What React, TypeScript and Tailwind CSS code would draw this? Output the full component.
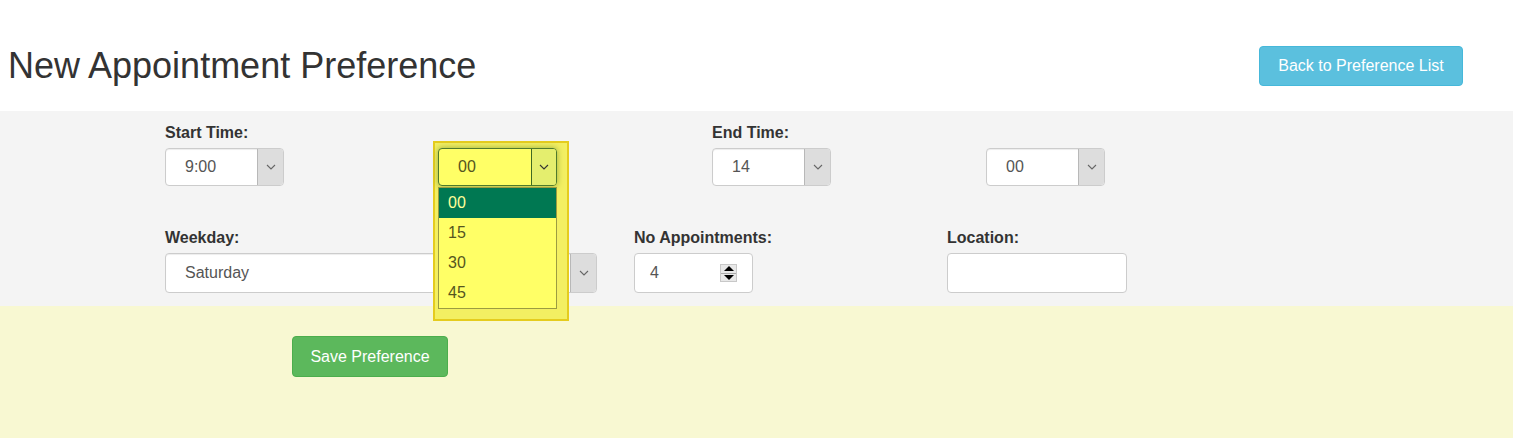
import React from 'react';

const Chevron: React.FC<{ className?: string }> = ({ className = '' }) => (
  <svg width="10" height="6" viewBox="0 0 10 6" className={className}>
    <path d="M1 1 L5 5 L9 1" fill="none" stroke="currentColor" strokeWidth="1.1" />
  </svg>
);

interface SelectBoxProps {
  value: string;
  width: string;
  height?: string;
}

const SelectBox: React.FC<SelectBoxProps> = ({ value, width, height = 'h-[38px]' }) => (
  <div className={`flex ${width} ${height} bg-white border border-[#cccccc] rounded-[4px] shadow-[inset_0_1px_1px_rgba(0,0,0,0.075)]`}>
    <div className="flex-1 flex items-center pl-[19px] text-[16px] text-[#555555]">{value}</div>
    <div className="w-[26px] flex items-center justify-center bg-[#dddddd] border-l border-[#b8b8b8] rounded-r-[3px] text-[#666666]">
      <Chevron />
    </div>
  </div>
);

const Label: React.FC<{ children: React.ReactNode }> = ({ children }) => (
  <label className="block h-[20px] leading-[20px] mb-[5px] text-[16px] font-bold text-[#333333]">{children}</label>
);

export default function App() {
  const minutes = ['00', '15', '30', '45'];

  return (
    <div className="w-[1513px] h-[438px] bg-white font-['Liberation_Sans',Arial,sans-serif] text-[#333333] overflow-hidden">
      {/* Header */}
      <div className="h-[111px] flex items-center justify-between pl-[8px] pr-[50px] pt-[21px]">
        <h1 className="text-[36px] leading-[40px] font-normal text-[#333333]">New Appointment Preference</h1>
        <button className="h-[40px] w-[204px] bg-[#5bc0de] border border-[#46b8da] rounded-[4px] text-white text-[16px]">
          Back to Preference List
        </button>
      </div>

      {/* Form panel */}
      <div className="bg-[#f4f4f4] pt-[12px] pb-[13px] pl-[165px]">
        <div className="flex">
          <div className="w-[273px]">
            <Label>Start Time:</Label>
            <SelectBox value="9:00" width="w-[119px]" />
          </div>
          <div className="w-[274px] pt-[25px]">
            <div className="relative w-[119px]">
              {/* open dropdown, highlighted */}
              <div className="absolute left-[-5px] top-[-7px] w-[136px] h-[180px] bg-[#f3ef62] border-2 border-[#e5cc1e]" />
              <div className="relative flex w-[119px] h-[38px] bg-[#ffff66] border border-[#4f7a2c] rounded-[4px] shadow-[0_0_6px_rgba(90,130,40,0.6)]">
                <div className="flex-1 flex items-center pl-[19px] text-[16px] text-[#555520]">00</div>
                <div className="w-[25px] flex items-center justify-center bg-[#e4ee6e] border-l border-[#3f6a22] rounded-r-[3px] text-[#333333]">
                  <Chevron />
                </div>
              </div>
              <div className="absolute left-0 top-[39px] w-[119px] bg-[#ffff66] border border-[#9c9c40]">
                {minutes.map((m, i) => (
                  <div
                    key={m}
                    className={`h-[30px] flex items-center pl-[9px] text-[16px] ${i === 0 ? 'bg-[#007852] text-[#ffff99]' : 'text-[#555520]'}`}
                  >
                    {m}
                  </div>
                ))}
              </div>
            </div>
          </div>
          <div className="w-[274px]">
            <Label>End Time:</Label>
            <SelectBox value="14" width="w-[119px]" />
          </div>
          <div className="pt-[25px]">
            <SelectBox value="00" width="w-[119px]" />
          </div>
        </div>

        <div className="flex mt-[42px]">
          <div className="w-[469px]">
            <Label>Weekday:</Label>
            <SelectBox value="Saturday" width="w-[432px]" height="h-[40px]" />
          </div>
          <div className="w-[313px]">
            <Label>No Appointments:</Label>
            <div className="flex items-center w-[119px] h-[40px] bg-white border border-[#cccccc] rounded-[4px] pl-[15px] pr-[15px]">
              <span className="flex-1 text-[16px] text-[#555555]">4</span>
              <div className="w-[17px] h-[18px] flex flex-col bg-[#e8e8e8] border border-[#c8c8c8]">
                <div className="flex-1 flex items-center justify-center border-b border-[#aaaaaa]">
                  <div className="w-0 h-0 border-l-[5px] border-r-[5px] border-b-[5px] border-l-transparent border-r-transparent border-b-black" />
                </div>
                <div className="flex-1 flex items-center justify-center">
                  <div className="w-0 h-0 border-l-[5px] border-r-[5px] border-t-[5px] border-l-transparent border-r-transparent border-t-black" />
                </div>
              </div>
            </div>
          </div>
          <div>
            <Label>Location:</Label>
            <div className="w-[180px] h-[40px] bg-white border border-[#cccccc] rounded-[4px]" />
          </div>
        </div>
      </div>

      {/* Footer area */}
      <div className="bg-[#f8f8d2] h-[132px] pt-[30px] pl-[292px]">
        <button className="h-[41px] w-[156px] bg-[#5cb85c] border border-[#4cae4c] rounded-[4px] text-white text-[16px]">
          Save Preference
        </button>
      </div>
    </div>
  );
}
